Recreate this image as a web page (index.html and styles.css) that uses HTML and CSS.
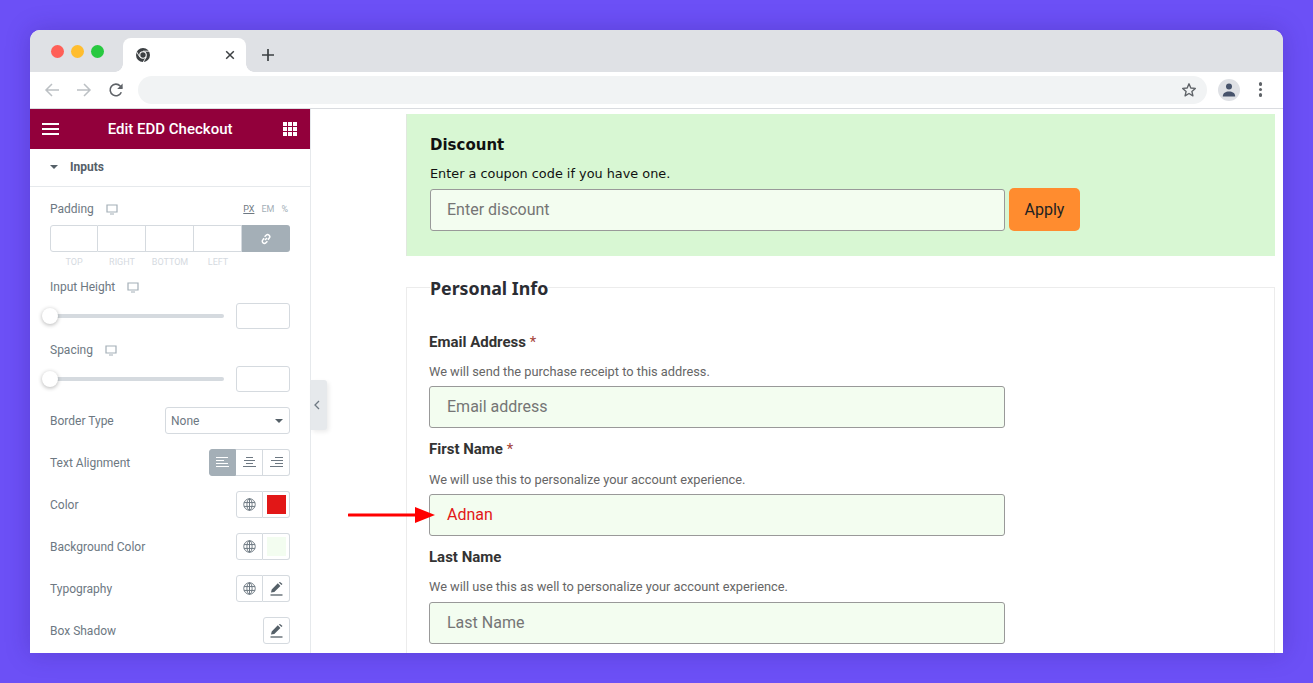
FILE: index.html
```html
<!DOCTYPE html>
<html lang="en">
<head>
<meta charset="utf-8">
<title>Edit EDD Checkout</title>
<link rel="stylesheet" href="styles.css">
</head>
<body>
<div class="window">
  <div class="tabstrip">
    <div class="lights"><i class="red"></i><i class="yellow"></i><i class="green"></i></div>
    <div class="tab">
      <svg class="chrome" width="16" height="16" viewBox="0 0 16 16"><circle cx="8" cy="8" r="7" fill="#3c4043"/><circle cx="8" cy="8" r="3.8" fill="#fff"/><circle cx="8" cy="8" r="2.7" fill="#3c4043"/><path d="M8 4.2h6.2M4.7 9.9 1.6 4.8M11.3 9.9l-3.1 5.2" stroke="#fff" stroke-width=".9"/></svg>
      <svg class="tabclose" width="10" height="10" viewBox="0 0 10 10"><path d="M1.2 1.2l7.6 7.6M8.8 1.2l-7.6 7.6" stroke="#3c4043" stroke-width="1.5"/></svg>
    </div>
    <svg class="newtab" width="12" height="12" viewBox="0 0 12 12"><path d="M6 0v12M0 6h12" stroke="#3c4043" stroke-width="1.7"/></svg>
  </div>
  <div class="toolbar">
    <svg class="navicon" width="16" height="16" viewBox="0 0 16 16"><path d="M15 8H2M8 2 2 8l6 6" fill="none" stroke="#bcc0c4" stroke-width="1.5"/></svg>
    <svg class="navicon" width="16" height="16" viewBox="0 0 16 16"><path d="M1 8h13M8 2l6 6-6 6" fill="none" stroke="#bcc0c4" stroke-width="1.5"/></svg>
    <svg class="navicon" width="16" height="16" viewBox="0 0 16 16"><path d="M13.3 10.2A5.8 5.8 0 1 1 12.2 4L14 5.8" fill="none" stroke="#5f6368" stroke-width="1.6"/><path d="M14.6 1.6v5.4H9.2z" fill="#5f6368"/></svg>
    <div class="omnibox">
      <svg width="16" height="16" viewBox="0 0 16 16"><path d="M8 1.8l1.8 4.2 4.5.4-3.4 3 1 4.4L8 11.5l-3.9 2.3 1-4.4-3.4-3 4.5-.4z" fill="none" stroke="#5f6368" stroke-width="1.4" stroke-linejoin="round"/></svg>
    </div>
    <div class="avatar"><svg width="14" height="14" viewBox="0 0 14 14"><circle cx="7" cy="3.6" r="3" fill="#47536b"/><path d="M0.8 13.5c0-3.6 2.8-5 6.2-5s6.2 1.4 6.2 5z" fill="#47536b"/></svg></div>
    <div class="kebab"><i></i><i></i><i></i></div>
  </div>
  <div class="content">
    <aside class="panel">
      <header class="panel-head">
        <div class="burger"><i></i><i></i><i></i></div>
        <h1>Edit EDD Checkout</h1>
        <div class="apps"><i></i><i></i><i></i><i></i><i></i><i></i><i></i><i></i><i></i></div>
      </header>
      <div class="section-title"><span class="caret"></span>Inputs</div>
      <div class="controls">
        <div class="label-row padding-label">
          <span>Padding</span>
          <svg class="monitor" viewBox="0 0 12 11"><path d="M1 1h10v7H1z" fill="none" stroke="#a4afb7" stroke-width="1.2"/><path d="M4 10h4" stroke="#a4afb7"/></svg>
          <span class="units"><u>PX</u><b>EM</b><b>%</b></span>
        </div>
        <div class="dimensions">
          <div class="dim"></div><div class="dim"></div><div class="dim"></div><div class="dim"></div>
          <div class="dim-link"><svg width="12" height="12" viewBox="0 0 12 12"><path d="M5 7l2-2M4.6 3.8l1.5-1.5a2.1 2.1 0 0 1 3 3L7.9 6.8M7.4 8.2 5.9 9.7a2.1 2.1 0 0 1-3-3l1.2-1.5" fill="none" stroke="#fff" stroke-width="1.5"/></svg></div>
        </div>
        <div class="dim-labels"><span>TOP</span><span>RIGHT</span><span>BOTTOM</span><span>LEFT</span></div>

        <div class="label-row height-label"><span>Input Height</span><svg class="monitor" viewBox="0 0 12 11"><path d="M1 1h10v7H1z" fill="none" stroke="#a4afb7" stroke-width="1.2"/><path d="M4 10h4" stroke="#a4afb7"/></svg></div>
        <div class="slider-row"><div class="track"><span class="knob"></span></div><div class="num"></div></div>

        <div class="label-row spacing-label"><span>Spacing</span><svg class="monitor" viewBox="0 0 12 11"><path d="M1 1h10v7H1z" fill="none" stroke="#a4afb7" stroke-width="1.2"/><path d="M4 10h4" stroke="#a4afb7"/></svg></div>
        <div class="slider-row"><div class="track"><span class="knob"></span></div><div class="num"></div></div>

        <div class="row">
          <span>Border Type</span>
          <div class="select">None<span class="select-caret"></span></div>
        </div>
        <div class="row">
          <span>Text Alignment</span>
          <div class="group">
            <div class="cell active"><svg width="13" height="11" viewBox="0 0 13 11"><path d="M0 .5h12M0 3.5h8M0 6.5h12M0 9.5h13" stroke="#fff" stroke-width="1.1"/></svg></div>
            <div class="cell"><svg width="13" height="11" viewBox="0 0 13 11"><path d="M3 .5h7M1 3.5h11M3 6.5h7M0 9.5h13" stroke="#6d7882" stroke-width="1.1"/></svg></div>
            <div class="cell"><svg width="13" height="11" viewBox="0 0 13 11"><path d="M5 .5h8M1 3.5h12M5 6.5h8M0 9.5h13" stroke="#6d7882" stroke-width="1.1"/></svg></div>
          </div>
        </div>
        <div class="row">
          <span>Color</span>
          <div class="group">
            <div class="cell"><svg class="globe" viewBox="0 0 12 12"><circle cx="6" cy="6" r="5.3"/><ellipse cx="6" cy="6" rx="2.4" ry="5.3"/><path d="M1 4.2h10M1 7.8h10M6 .7v10.6"/></svg></div>
            <div class="cell swatch-cell"><span class="swatch swatch-red"></span></div>
          </div>
        </div>
        <div class="row">
          <span>Background Color</span>
          <div class="group">
            <div class="cell"><svg class="globe" viewBox="0 0 12 12"><circle cx="6" cy="6" r="5.3"/><ellipse cx="6" cy="6" rx="2.4" ry="5.3"/><path d="M1 4.2h10M1 7.8h10M6 .7v10.6"/></svg></div>
            <div class="cell swatch-cell"><span class="swatch swatch-mint"></span></div>
          </div>
        </div>
        <div class="row">
          <span>Typography</span>
          <div class="group">
            <div class="cell"><svg class="globe" viewBox="0 0 12 12"><circle cx="6" cy="6" r="5.3"/><ellipse cx="6" cy="6" rx="2.4" ry="5.3"/><path d="M1 4.2h10M1 7.8h10M6 .7v10.6"/></svg></div>
            <div class="cell"><svg width="13" height="14" viewBox="0 0 13 14"><path d="M1 10.6l.7-3.2L7.8 1.3l2.6 2.6-6.1 6.1zM8.8.4l2.6 2.6 1.1-1.1L10 0z" fill="#556068"/><path d="M.5 13h12" stroke="#556068" stroke-width="1.3"/></svg></div>
          </div>
        </div>
        <div class="row">
          <span>Box Shadow</span>
          <div class="group">
            <div class="cell"><svg width="13" height="14" viewBox="0 0 13 14"><path d="M1 10.6l.7-3.2L7.8 1.3l2.6 2.6-6.1 6.1zM8.8.4l2.6 2.6 1.1-1.1L10 0z" fill="#556068"/><path d="M.5 13h12" stroke="#556068" stroke-width="1.3"/></svg></div>
          </div>
        </div>
      </div>
    </aside>
    <main class="preview">
      <div class="collapse"><svg width="6" height="10" viewBox="0 0 6 10"><path d="M5 1 1 5l4 4" fill="none" stroke="#6d7882" stroke-width="1.3"/></svg></div>
      <section class="discount">
        <h2>Discount</h2>
        <p>Enter a coupon code if you have one.</p>
        <div class="discount-row">
          <div class="input input-discount"><span class="ph">Enter discount</span></div>
          <div class="apply">Apply</div>
        </div>
      </section>
      <section class="info">
        <h2>Personal Info</h2>
        <div class="field">
          <label>Email Address <em>*</em></label>
          <p>We will send the purchase receipt to this address.</p>
          <div class="input"><span class="ph">Email address</span></div>
        </div>
        <div class="field">
          <label>First Name <em>*</em></label>
          <p>We will use this to personalize your account experience.</p>
          <div class="input">
            <span class="value">Adnan</span>
            <svg class="arrow" width="88" height="18" viewBox="0 0 88 18"><path d="M1 9h68" stroke="#f00" stroke-width="3" stroke-linecap="round"/><path d="M67 1l20 8-20 8z" fill="#f00"/></svg>
          </div>
        </div>
        <div class="field">
          <label>Last Name</label>
          <p class="last-hint">We will use this as well to personalize your account experience.</p>
          <div class="input"><span class="ph">Last Name</span></div>
        </div>
      </section>
    </main>
  </div>
</div>
</body>
</html>
```
FILE: styles.css
```css
* { box-sizing: border-box; }
html, body { margin: 0; height: 683px; overflow: hidden; }
body { background: #6c50f6; padding: 30px; font-family: Roboto, "Liberation Sans", sans-serif; }

.window { height: 623px; background: #fff; border-radius: 10px 10px 0 0; overflow: hidden; box-shadow: 0 0 24px rgba(40,20,120,.25); display: flex; flex-direction: column; }

.tabstrip { height: 42px; background: #dfe1e5; display: flex; align-items: flex-end; flex: none; }
.lights { display: flex; gap: 7px; padding-left: 21px; width: 93px; height: 42px; align-items: center; align-self: flex-start; }
.lights i { width: 13px; height: 13px; border-radius: 50%; display: block; }
.red { background: #ff5f57; }
.yellow { background: #ffbd2e; }
.green { background: #28c940; }
.tab { width: 123px; height: 34px; background: #fff; border-radius: 8px 8px 0 0; display: flex; align-items: center; justify-content: space-between; padding: 0 11px 0 12px; position: relative; }
.tab::before, .tab::after { content: ""; position: absolute; bottom: 0; width: 8px; height: 8px; }
.tab::before { left: -8px; background: radial-gradient(circle at 0 0, transparent 7.5px, #fff 8px); }
.tab::after { right: -8px; background: radial-gradient(circle at 100% 0, transparent 7.5px, #fff 8px); }
.newtab { margin: 0 0 11px 16px; }

.toolbar { height: 37px; flex: none; background: #fff; border-bottom: 1px solid #dadce0; display: flex; align-items: center; padding: 0 0 1px 14px; }
.navicon { margin-right: 16px; }
.navicon:nth-child(3) { margin-right: 14px; }
.omnibox { width: 1069px; height: 28px; background: #f1f3f4; border-radius: 14px; display: flex; align-items: center; justify-content: flex-end; padding-right: 10px; }
.avatar { width: 22px; height: 22px; border-radius: 50%; background: #dfe1e5; margin-left: 11px; display: flex; align-items: center; justify-content: center; }
.kebab { margin-left: 19px; display: flex; flex-direction: column; gap: 2px; }
.kebab i { width: 3.4px; height: 3.4px; border-radius: 50%; background: #5f6368; display: block; }

.content { flex: 1; display: flex; min-height: 0; }

.panel { width: 281px; flex: none; background: #fff; border-right: 1px solid #e6e9ec; color: #6d7882; font-size: 12px; }
.panel-head { height: 40px; background: #92003b; display: flex; align-items: center; justify-content: space-between; padding: 0 13px 0 12px; color: #fff; }
.panel-head h1 { margin: 0 0 0 -2px; font-size: 15px; font-weight: 500; }
.burger { display: flex; flex-direction: column; gap: 3px; }
.burger i { display: block; width: 17px; height: 2px; background: #fff; }
.apps { display: grid; grid-template-columns: repeat(3, 3.6px); gap: 1.5px; }
.apps i { display: block; height: 3.6px; background: #fff; }

.section-title { height: 38px; border-bottom: 1px solid #e6e9ec; display: flex; align-items: center; padding: 0 0 2px 20px; font-weight: 700; font-size: 12px; color: #556068; }
.caret { width: 0; height: 0; border: 4px solid transparent; border-top-color: #556068; border-bottom: 0; margin-right: 12px; }

.controls { padding: 0 20px; }
.label-row { display: flex; align-items: center; height: 14px; }
.monitor { width: 12px; height: 11px; margin-left: 12px; }
.padding-label { margin-top: 15px; }
.units { margin-left: auto; display: flex; gap: 7px; font-size: 9px; color: #a4afb7; margin-right: 2px; }
.units u { color: #6d7882; }
.units b { font-weight: 400; }
.dimensions { display: flex; height: 27px; margin-top: 9px; }
.dim { width: 48px; border: 1px solid #d5dadf; border-left: 0; }
.dim:first-child { border-left: 1px solid #d5dadf; border-radius: 3px 0 0 3px; }
.dim-link { width: 48px; background: #a4afb7; border-radius: 0 3px 3px 0; display: flex; align-items: center; justify-content: center; }
.dim-labels { display: flex; height: 19px; padding-top: 1px; align-items: center; font-size: 9px; color: #d5dadf; }
.dim-labels span { width: 48px; text-align: center; }
.height-label { margin-top: 9px; }
.spacing-label { margin-top: 14px; }
.slider-row { display: flex; align-items: center; justify-content: space-between; height: 26px; margin-top: 9px; }
.track { width: 174px; height: 4px; background: #d5dadf; border-radius: 2px; position: relative; }
.knob { position: absolute; left: -8px; top: -6px; width: 16px; height: 16px; border-radius: 50%; background: #fff; box-shadow: 0 1px 4px rgba(0,0,0,.3); }
.num { width: 54px; height: 26px; border: 1px solid #d5dadf; border-radius: 3px; }

.row { display: flex; align-items: center; justify-content: space-between; height: 27px; margin-top: 15px; }
.select { width: 125px; height: 27px; border: 1px solid #d5dadf; border-radius: 3px; display: flex; align-items: center; justify-content: space-between; padding: 0 6px 0 5px; }
.select-caret { width: 0; height: 0; border: 4px solid transparent; border-top: 4px solid #556068; border-bottom: 0; }
.group { display: flex; height: 27px; }
.cell { width: 27px; height: 27px; border: 1px solid #d5dadf; border-left: 0; display: flex; align-items: center; justify-content: center; }
.cell:first-child { border-left: 1px solid #d5dadf; border-radius: 3px 0 0 3px; }
.cell:last-child { border-radius: 0 3px 3px 0; }
.cell:only-child { border-radius: 3px; }
.cell.active { background: #a4afb7; border-color: #a4afb7; }
.globe { width: 13px; height: 13px; fill: none; stroke: #6d7882; stroke-width: .9; }
.swatch { width: 19px; height: 19px; display: block; }
.swatch-red { background: #e21717; }
.swatch-mint { background: #f3fdf0; }

.preview { flex: 1; position: relative; padding: 5px 8px 0 95px; min-width: 0; }
.collapse { position: absolute; left: 0; top: 271px; width: 16px; height: 50px; background: #e6e9ec; border-radius: 0 3px 3px 0; box-shadow: 2px 2px 4px rgba(0,0,0,.08); display: flex; align-items: center; justify-content: center; padding-right: 4px; }

.discount { height: 142px; background: #d8f7d3; padding: 22px 23px 0; border-left: 1px solid #e0e8de; }
.discount h2 { margin: 0; font: 700 15px/18px "DejaVu Sans", sans-serif; color: #111; }
.discount p { margin: 12px 0 0; font: 12.85px/16px "DejaVu Sans", sans-serif; color: #111; }
.discount-row { display: flex; align-items: center; gap: 4px; margin-top: 6px; }
.input { width: 576px; height: 42px; background: #f3fdf0; border: 1px solid #999; border-radius: 3px; display: flex; align-items: center; padding: 0 0 1px 17px; font-size: 16px; position: relative; }
.input-discount { width: 575px; padding: 0 0 0 16px; }
.ph { color: #757575; }
.value { color: #e21717; }
.apply { width: 71px; height: 43px; background: #ff8c2f; border-radius: 5px; color: #222; font-size: 16px; display: flex; align-items: center; justify-content: center; }

.info { margin-top: 31px; border: 1px solid #ececec; border-bottom: 0; padding: 0 22px; height: 400px; }
.info h2 { margin: -11px 0 0 1px; font: 700 17.8px/22px "Noto Sans", sans-serif; color: #2b2d33; background: #fff; width: fit-content; position: relative; }
.field { position: relative; }
.field label { display: block; font-size: 15px; font-weight: 700; line-height: 18px; color: #333; margin-top: 12px; }
.field:first-of-type label { margin-top: 34px; }
.field em { color: #a5443a; font-style: normal; font-weight: 400; }
.field p { margin: 14px 0 6px; font-size: 12.8px; line-height: 16px; color: #666; }
.field:first-of-type p { margin-top: 13px; }
.field .last-hint { margin: 13px 0 7px; }
.arrow { position: absolute; left: -82px; top: 11px; }
```
